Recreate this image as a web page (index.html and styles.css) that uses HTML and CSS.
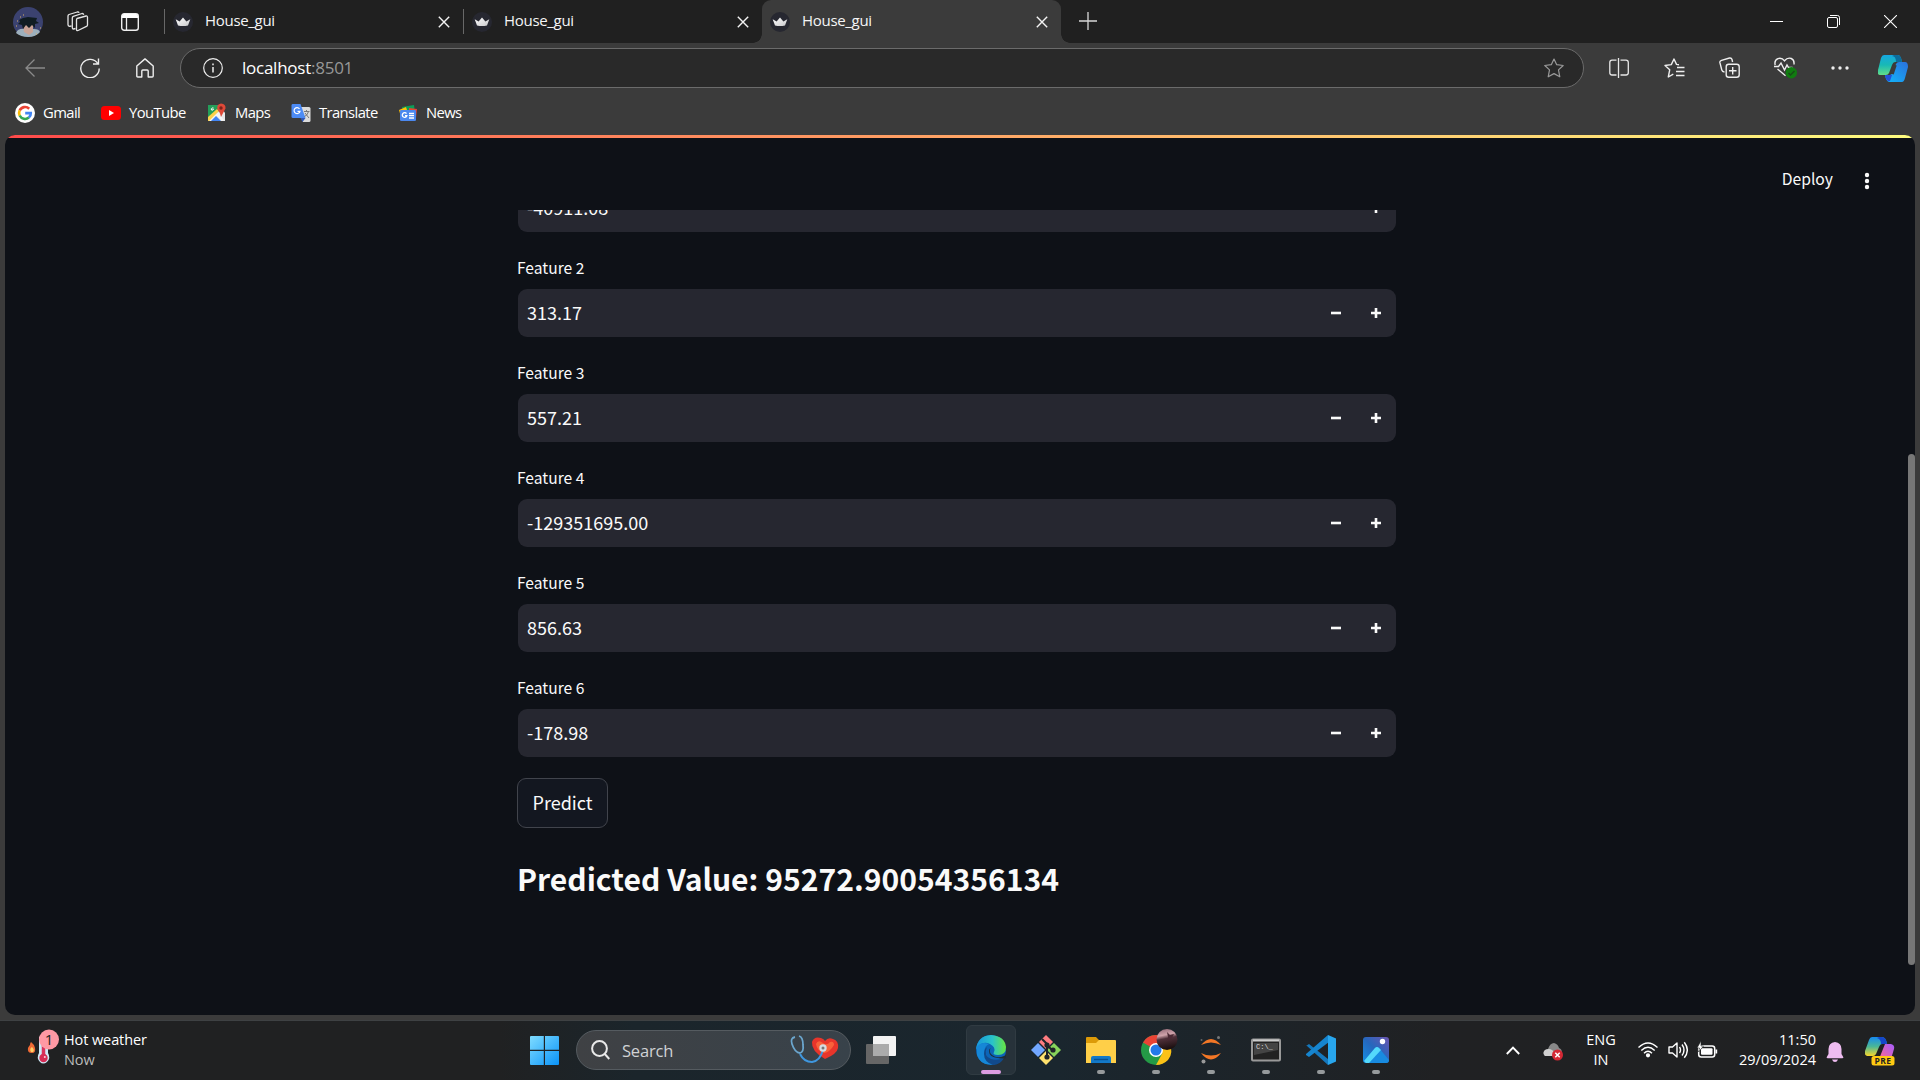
FILE: index.html
```html
<!DOCTYPE html>
<html lang="en">
<head>
<meta charset="utf-8">
<title>House_gui</title>
<link rel="stylesheet" href="styles.css">
</head>
<body>
<svg width="0" height="0" class="defs">
  <defs>
    <linearGradient id="crownFill" x1="0" y1="0" x2="1" y2="1"><stop offset="0" stop-color="#fff"/><stop offset="1" stop-color="#c9c9cc"/></linearGradient>
    <linearGradient id="winFill" x1="0" y1="0" x2="1" y2="1"><stop offset="0" stop-color="#7fdcff"/><stop offset="1" stop-color="#0a93f8"/></linearGradient>
    <linearGradient id="teal" x1="0" y1="0" x2="0" y2="1"><stop offset="0" stop-color="#16a7e0"/><stop offset=".5" stop-color="#18b9b5"/><stop offset="1" stop-color="#62dd88"/></linearGradient>
    <linearGradient id="blue" x1="1" y1="0" x2="0" y2="1"><stop offset="0" stop-color="#2b70dd"/><stop offset="1" stop-color="#11b8fb"/></linearGradient>
    <symbol id="crown" viewBox="0 0 20 20"><circle cx="10" cy="10" r="10" fill="#262730"/><path d="M2.700 7.200 6.600 9.400 10 5.400l3.400 4 3.900-2.200L15 13.600q-5 1-10 0Z" fill="url(#crownFill)"/></symbol>
    <symbol id="x" viewBox="0 0 12 12"><path d="M.8.8 11.200 11.200M11.200.8.8 11.200" stroke="#f4f4f4" stroke-width="1.400"/></symbol>
    <symbol id="minus" viewBox="0 0 12 12"><path d="M1 6H11" stroke="#fafafa" stroke-width="2.600"/></symbol>
    <symbol id="plus" viewBox="0 0 12 12"><path d="M1 6H11M6 1V11" stroke="#fafafa" stroke-width="2.600"/></symbol>
  </defs>
</svg>
<div class="screen">
  <header class="tabstrip">
    <div class="slot avatar"><svg width="30" height="30" viewBox="0 0 30 30"><circle cx="15" cy="15" r="15" fill="#3b4270"/><path d="M3 26Q5 21 12 22h9q5 0 6 3Q23 30 15 30 8 30 3 26Z" fill="#9db0bd"/><path d="M10 17h10v8l-4 3-5-3Z" fill="#c9a396"/><path d="M6 13l4-2 5-1 9 1-1 3 3 2-4 1 0 4-3-3-3 3-3-3-3 4-1-4-4-1 2-2Z" fill="#101c22"/><path d="M4 14h1M7 10h1M10 8h1M3 19h1M23 27h1M27 21h1" stroke="#d9b06a" stroke-width="1"/></svg></div>
    <div class="slot work"><svg width="22" height="22" viewBox="0 0 22 22" fill="none" stroke="#e4e4e4" stroke-width="1.300" stroke-linejoin="round"><path d="M10 7.500 19 5q1.500-.3 1.500 1.200V14q0 1-1 1.400L11 19.500q-1.500.5-1.500-1V9Q9.500 7.800 10 7.500Z"/><path d="M8.500 17.500 6.500 18q-1.200 0-1.200-1.200V7Q5.300 5.700 6.300 5.300L15 2.500q1.300-.2 1.800 1.300"/><path d="M4.500 15 2.500 15.300Q1 15 1 13.800V5Q1 4 2 3.500L10.300 1q1.300-.3 1.800.8"/></svg></div>
    <div class="slot vert"><svg width="18" height="18" viewBox="0 0 18 18"><rect x=".7" y=".7" width="16.600" height="16.600" rx="2.500" fill="none" stroke="#eee" stroke-width="1.400"/><path d="M1 5V3q0-2 2-2h12q2 0 2 2v2Z" fill="#fff"/><path d="M5.500 5V17" stroke="#eee" stroke-width="1.300"/></svg></div>
    <div class="tab"><svg class="fav"><use href="#crown"/></svg><span>House_gui</span><svg class="tabx"><use href="#x"/></svg></div>
    <div class="tab"><svg class="fav"><use href="#crown"/></svg><span>House_gui</span><svg class="tabx"><use href="#x"/></svg></div>
    <div class="tab active"><svg class="fav"><use href="#crown"/></svg><span>House_gui</span><svg class="tabx"><use href="#x"/></svg></div>
    <div class="slot newtab"><svg width="18" height="18" viewBox="0 0 18 18"><path d="M0 9H18M9 0V18" stroke="#d8d8d8" stroke-width="1.300"/></svg></div>
    <div class="winctl">
      <svg width="13" height="13" viewBox="0 0 13 13"><path d="M0 6.500H13" stroke="#fff"/></svg>
      <svg width="13" height="13" viewBox="0 0 13 13" fill="none" stroke="#fff"><rect x=".5" y="2.500" width="10" height="10" rx="1.500"/><path d="M3 .5h7.500q2 0 2 2V10"/></svg>
      <svg width="13" height="13" viewBox="0 0 13 13"><path d="M0 0 13 13M13 0 0 13" stroke="#fff" stroke-width="1.100"/></svg>
    </div>
  </header>

  <nav class="toolbar">
    <div class="slot nav"><svg width="20" height="18" viewBox="0 0 20 18" fill="none" stroke="#8a8a8a" stroke-width="1.300"><path d="M9.500.5 1 9l8.500 8.500M1 9H20"/></svg></div>
    <div class="slot nav"><svg width="20" height="20" viewBox="0 0 20 20" fill="none" stroke="#eee" stroke-width="1.400"><path d="M18 6A9.200 9.200 0 1 0 19.200 10.500M18.500.5V6H13"/></svg></div>
    <div class="slot nav"><svg width="18" height="20" viewBox="0 0 18 20" fill="none" stroke="#eee" stroke-width="1.400" stroke-linejoin="round"><path d="M.8 8 9 .9 17.200 8V18q0 1-1 1h-4V13q0-1-1-1H6.800q-1 0-1 1v6h-4q-1 0-1-1Z"/></svg></div>
    <div class="address">
      <svg width="20" height="20" viewBox="0 0 20 20"><circle cx="10" cy="10" r="9.300" fill="none" stroke="#eee" stroke-width="1.200"/><path d="M10 9v5.500M10 5.500v1.700" stroke="#eee" stroke-width="1.500"/></svg>
      <span class="url">localhost<i>:8501</i></span>
      <svg class="star" width="20" height="20" viewBox="0 0 20 20" fill="none" stroke="#999" stroke-width="1.200" stroke-linejoin="round"><path d="m10 1 2.700 5.700 6.500.8-4.700 4.400 1.300 6.900L10 15.600 4.200 18.800l1.300-6.900L.8 7.500l6.500-.8Z"/></svg>
    </div>
    <div class="slot tool first"><svg width="20" height="20" viewBox="0 0 20 20" fill="none" stroke="#e8e8e8" stroke-width="1.300"><path d="M7.500 2.200H3Q.8 2.200.8 4.500v10q0 2.500 2.200 2.500h4.500M11.500 2.200H17q2.300 0 2.300 2.300v10q0 2.500-2.300 2.500h-5.500M9.500 0V20"/></svg></div>
    <div class="slot tool"><svg width="21" height="20" viewBox="0 0 21 20" fill="none" stroke="#eee" stroke-width="1.400" stroke-linejoin="round"><path d="M15 6.800 12.500 6.400 10 1 7.300 6.600 1 7.500l4.700 4.300L4.300 19l5-2.800M13 9.500h7.500M12 13.500h8.500M12 17.500h8.500"/></svg></div>
    <div class="slot tool"><svg width="21" height="21" viewBox="0 0 21 21" fill="none" stroke="#eee" stroke-width="1.400"><rect x="7.200" y="7.200" width="13" height="13" rx="2.500"/><path d="M13.700 10V17.500M10 13.700h7.500M5.500 15q-2.200-.2-2.700-2L.9 5.700Q.5 4 2.500 3.300L10.500 1Q12.500.7 13 2.500l.6 2.500"/></svg></div>
    <div class="slot tool"><svg width="23" height="22" viewBox="0 0 23 22" fill="none" stroke="#eee" stroke-width="1.400"><path d="M1.200 8Q0 3.200 4 1.600 8 .5 10.500 3.800 13.500.2 17.300 1.500 20.500 3 20 7.500M0 9.500h4.500L7 6l3.500 7 2.500-5 1.500 2.500h4M3.500 12l8 6.700"/><circle cx="17.300" cy="15.700" r="5.700" fill="#107c10" stroke="none"/><path d="m14.500 16 2 2 4-4" stroke="#174c17"/></svg></div>
    <div class="slot tool dots"><svg width="18" height="4" viewBox="0 0 18 4" fill="#eee"><circle cx="2" cy="2" r="1.700"/><circle cx="9" cy="2" r="1.700"/><circle cx="16" cy="2" r="1.700"/></svg></div>
    <div class="slot copilot"><svg width="30" height="27" viewBox="0 0 30 27"><path d="M6 0H20q2 0 3 3l1 4H17q-2 0-3 3l-3 8q-1 2-3 2H2q-3 0-2-5L3 3Q4 0 6 0Z" fill="url(#teal)"/><path d="M16 0h4q2 0 3 3l1 4h-6Q18 1 14 1Z" fill="#0c6c9c"/><path d="M24 27H11q-3-1-4-7h5q2 0 3-3l3-8q1-2 3-2h6q3 0 3 5l-3 11q-1 4-3 4Z" fill="url(#blue)"/><path d="M7 20h7l-2 6Q8 27 7 20Z" fill="#2450d8"/><path d="m17 10-3 9" stroke="#3b3b3b" stroke-width="3.500"/></svg></div>
  </nav>

  <nav class="bookmarks">
    <a class="gmail"><svg width="20" height="20" viewBox="0 0 20 20"><circle cx="10" cy="10" r="10" fill="#fff"/><g fill="none" stroke-width="2.600"><path d="M14.200 5.700A5.900 5.900 0 0 0 4.700 7.500" stroke="#ea4335"/><path d="M4.700 7.400a5.900 5.900 0 0 0 0 5.200" stroke="#fbbc05"/><path d="M4.700 12.500a5.900 5.900 0 0 0 9.200 2" stroke="#34a853"/><path d="M13.800 14.500Q16 12.500 15.800 10.100H10.200" stroke="#4285f4"/></g></svg><span>Gmail</span></a>
    <a class="yt"><svg width="20" height="20" viewBox="0 0 20 20"><rect y="3" width="20" height="14" rx="3.500" fill="#f00"/><path d="M8 7v6l5-3Z" fill="#fff"/></svg><span>YouTube</span></a>
    <a class="maps"><svg width="20" height="20" viewBox="0 0 20 20"><path d="M1 2h12l5 8v8H1Z" fill="#e8e8e8"/><path d="M1 2h11L12 8 1 17Z" fill="#249f5a"/><path d="m1 18 10-9 6 8-2 1-5-5-6 5Z" fill="#f5f5f5"/><path d="m1 14 9-8 2 2L2 18H1Z" fill="#fcd24c"/><path d="m4 18 5-5 5 5Z" fill="#4285f4"/><path d="M14 14Q13 9 10.500 6.500 9 1.500 14 .5q5 .5 4.500 5Q16 10 14 14Z" fill="#df4938"/><circle cx="14" cy="5" r="1.700" fill="#7d231c"/><path d="M6.500 5H5.200q-1.500.7-.7 2 1.500.7 2-.7H5.500" stroke="#fff" fill="none"/></svg><span>Maps</span></a>
    <a class="trans"><svg width="20" height="20" viewBox="0 0 20 20"><path d="M7 4h11q1.500 0 1.500 1.500v12q0 1.500-1.500 1.500h-6Z" fill="#dcdcdc"/><path d="M1.500 1h8l5 14H2Q.5 15 .5 13.500V2.500Q.5 1 1.500 1Z" fill="#4c8bf5"/><path d="m9.500 15 5 0-3 4Z" fill="#3057b5"/><path d="M8.500 5.800a3 3 0 1 0 .5 2.500H6.500" stroke="#fff" stroke-width="1.200" fill="none"/><path d="M13 8.500h5.500M15.500 7v1.500M17.500 8.500q-1 4-4 5M14 10l4 5" stroke="#777" fill="none"/></svg><span>Translate</span></a>
    <a class="news"><svg width="20" height="20" viewBox="0 0 20 20"><path d="m4 4 12-2 1 8H5Z" fill="#0c9d58"/><path d="m1 7 7-3 3 9-8 1Z" fill="#ffc107"/><path d="m11 5 8 1-1 9h-7Z" fill="#e94235"/><rect x="2" y="7" width="16" height="11" rx="1.300" fill="#4b88ef"/><path d="M8.500 10.700a2.300 2.300 0 1 0 .3 2H7M11 10.500h5M11 12.700h5M11 15h5" stroke="#fff" stroke-width="1.300" fill="none"/></svg><span>News</span></a>
  </nav>

  <main class="page">
    <div class="rainbow"></div>
    <div class="apphead"><span class="deploy">Deploy</span><svg width="6" height="18" viewBox="0 0 6 18" fill="#fafafa"><circle cx="3" cy="3" r="2.200"/><circle cx="3" cy="9" r="2.200"/><circle cx="3" cy="15" r="2.200"/></svg></div>
    <section class="scroller">
      <div class="form">
        <div class="number"><span>-40911.08</span><svg><use href="#minus"/></svg><svg><use href="#plus"/></svg></div>
        <label>Feature 2</label>
        <div class="number"><span>313.17</span><svg><use href="#minus"/></svg><svg><use href="#plus"/></svg></div>
        <label>Feature 3</label>
        <div class="number"><span>557.21</span><svg><use href="#minus"/></svg><svg><use href="#plus"/></svg></div>
        <label>Feature 4</label>
        <div class="number"><span>-129351695.00</span><svg><use href="#minus"/></svg><svg><use href="#plus"/></svg></div>
        <label>Feature 5</label>
        <div class="number"><span>856.63</span><svg><use href="#minus"/></svg><svg><use href="#plus"/></svg></div>
        <label>Feature 6</label>
        <div class="number"><span>-178.98</span><svg><use href="#minus"/></svg><svg><use href="#plus"/></svg></div>
        <button class="predict">Predict</button>
        <h2>Predicted Value: 95272.90054356134</h2>
      </div>
    </section>
    <div class="thumb"></div>
  </main>

  <footer class="taskbar">
    <div class="weather">
      <svg width="34" height="38" viewBox="0 0 34 38"><path d="M1 19q1-2 2-3 0-2 1-3 3 2 4 6 1 5-3 5Q0 24 1 19Z" fill="#ef6a35"/><path d="M4 23q-2-3 1-5 3 3 1 5Z" fill="#ffd067"/><path d="M12 8q5-4 9 0V24q3 5-1 9-4 3-7 0-4-4-1-9Z" fill="#cfe9f7"/><path d="M16.500 12V28" stroke="#d8325a" stroke-width="3.500"/><circle cx="16.500" cy="29" r="4.200" fill="#d62c55"/><circle cx="17.800" cy="28" r="1" fill="#ffd0dc"/><circle cx="22" cy="10.500" r="10" fill="#ff99a4"/><text x="22" y="16" text-anchor="middle" class="badge">1</text></svg>
      <div class="wtext"><span>Hot weather</span><span class="dim">Now</span></div>
    </div>
    <div class="apps">
      <svg class="start" width="29" height="29" viewBox="0 0 29 29" fill="url(#winFill)"><path d="M1 0h12.800v13.800H0V1Q0 0 1 0ZM15 0h13q1 0 1 1v12.800H15ZM0 15h13.800v14H1q-1 0-1-1ZM15 15h14v13q0 1-1 1H15Z"/></svg>
      <div class="search">
        <svg width="19" height="20" viewBox="0 0 19 20" fill="none" stroke="#e9e9e9" stroke-width="2"><circle cx="8.500" cy="8.500" r="7.400"/><path d="m13.800 14 4.500 5"/></svg>
        <span>Search</span>
        <svg class="stetho" width="50" height="30" viewBox="0 0 50 30"><path d="M35 24Q21 16 22 7q2-6 9-4 3 1 4 3 3-4 8-2 6 2 5 9-1 6-13 11Z" fill="#e8352b"/><path d="M26 9q2-5 7-1 4 3 7-1 4-1 4 3-4 7-10 8-7-2-8-9Z" fill="#ff7040" opacity=".75"/><path d="M10 19Q14 27 22 27q8-1 11-12" stroke="#3f97df" stroke-width="2" fill="none"/><path d="M5 2Q0 3 2 9q3 9 8 9 4-1 3-8 0-8-4-9" stroke="#6ba6ce" stroke-width="1.800" fill="none"/><circle cx="33" cy="13" r="3.700" fill="#d7dce0"/><circle cx="33" cy="13" r="1.500" fill="#777"/></svg>
      </div>
      <svg class="taskview" width="30" height="28" viewBox="0 0 30 28"><rect y="8" width="23" height="20" rx="1" fill="#666"/><rect x="7" width="23" height="20" rx="1" fill="#f3f3f3"/><path d="M7 8h16v12H7Z" fill="#ababab"/></svg>
      <div class="app current"><svg width="30" height="30" viewBox="0 0 30 30"><defs><linearGradient id="eg" x1="0" x2="1"><stop offset="0" stop-color="#1795dc"/><stop offset=".55" stop-color="#2ac3c8"/><stop offset="1" stop-color="#68e640"/></linearGradient></defs><circle cx="15" cy="15" r="15" fill="#0c65b8"/><path d="M0 15Q1 1 15 0q14 1 15 12 0 8-8 8-6 0-4-3 2-5-4-8Q5 5 0 15Z" fill="url(#eg)"/><path d="M1 12Q5 6 13 9q-6 3-4 10 2 8 10 10-14 3-18-9Z" fill="#1687d7"/><path d="M11 12q-4 9 4 12 6 2 13-1-4 7-11 7Q8 27 8 19q0-5 3-7Z" fill="#114a8c"/><path d="M14.500 13q-2 4 1.500 7 5 4 12 1l2-1v3q-3 1-8 0-9-1-9-7 0-2 1.500-3Z" fill="#202d34"/></svg><b></b></div>
      <div class="app none"><svg width="30" height="30" viewBox="0 0 30 30"><path d="m15 0 7 7-7 7-7-7Z" fill="#ff7c80"/><path d="m7 8 7 7-7 7-7-7Z" fill="#72a7ff"/><path d="m23 8 7 7-7 7-7-7Z" fill="#88d35a"/><path d="m15 16 7 7-7 7-7-7Z" fill="#ffe26e"/><path d="M11 4l5 5v14M16 10l6 6" stroke="#202428" stroke-width="2" fill="none"/><circle cx="16" cy="10" r="2.600" fill="#202428"/><circle cx="16" cy="22" r="2.600" fill="#202428"/><circle cx="22" cy="15" r="2.600" fill="#202428"/></svg><b></b></div>
      <div class="app"><svg width="30" height="30" viewBox="0 0 30 30"><path d="M0 3Q0 2 1 2h9l3 3h12v8H0Z" fill="#dc9a08"/><path d="M0 8h10l3-3h16q1 0 1 1v22H0Z" fill="#ffcf48"/><path d="M5 28v-5q0-2 2-2h16q2 0 2 2v5Z" fill="#1379c8"/><path d="M8 24.500h14" stroke="#075092" stroke-width="1.400"/></svg><b></b></div>
      <div class="app"><svg class="chrome" width="38" height="38" viewBox="0 0 38 38"><defs><linearGradient id="pic" x1="0" y1="0" x2=".2" y2="1"><stop offset="0" stop-color="#8d6371"/><stop offset=".35" stop-color="#d0a3ab"/><stop offset=".52" stop-color="#50303a"/><stop offset="1" stop-color="#1c1011"/></linearGradient></defs><circle cx="19" cy="19" r="15" fill="#249a46"/><path d="M19 19 6 11.500Q10 4 19 4q9 0 13 7.500V19Z" fill="#ea4335"/><path d="M19 12h13.300Q37 22 31 29q-5 5-12 5l6.500-12Z" fill="#fbc116"/><circle cx="19" cy="19" r="7" fill="#fff"/><circle cx="19" cy="19" r="5.500" fill="#2479e9"/><circle cx="30" cy="8.500" r="10.500" fill="url(#pic)"/><path d="m30 1 1 5-1 4 5-3 2-4-4 1Z" fill="#4b2934"/></svg><b></b></div>
      <div class="app"><svg width="22" height="30" viewBox="0 0 22 30"><path d="M1 10Q11-2 21 10 11 5 1 10ZM1 18q10 5 20 0Q11 31 1 18Z" fill="#f37726"/><circle cx="18.500" cy="2.500" r="1.500" fill="#777"/><circle cx="1.500" cy="5" r="1" fill="#666"/><circle cx="3.500" cy="26.500" r="2" fill="#999"/></svg><b></b></div>
      <div class="app"><svg width="30" height="30" viewBox="0 0 30 30"><rect x="1" y="4.500" width="28" height="21" rx="1" fill="#222" stroke="#999" stroke-width="2"/><path d="M2 5.500H28" stroke="#ccc" stroke-width="2"/><path d="M3 8h24v7L3 20Z" fill="#444"/><text x="5" y="14" class="cmd">C:\_</text></svg><b></b></div>
      <div class="app"><svg width="30" height="30" viewBox="0 0 30 30"><path d="m0 11 3-2 19 15v6L1 11Z" fill="#1578bd"/><path d="m0 19 22-19 1 7L3 22l-3-2Z" fill="#1685cf"/><path d="m22 0 7 3q1 0 1 1v22q0 1-1 1l-7 3Z" fill="#28a6ed"/></svg><b></b></div>
      <div class="app"><svg width="26" height="26" viewBox="0 0 26 26"><defs><linearGradient id="ph" x1="0" y1="1" x2="1" y2="0"><stop stop-color="#158fe5"/><stop offset=".5" stop-color="#2567bd"/><stop offset="1" stop-color="#6d55af"/></linearGradient></defs><rect width="26" height="26" rx="3" fill="url(#ph)"/><path d="M1 24 12 11q2-2 4 0l10 12q0 3-3 3H3Z" fill="#188be1"/><path d="M1 24 12 11q2-2 4 0l2 2L6 26H3Z" fill="#54d9fb"/><circle cx="19.500" cy="4.500" r="2.700" fill="#fff"/></svg><b></b></div>
    </div>
    <div class="tray">
      <svg width="14" height="9" viewBox="0 0 14 9" fill="none" stroke="#fff" stroke-width="1.900"><path d="m.8 8 6.200-6.300L13.200 8"/></svg>
      <svg class="cloud" width="20" height="18" viewBox="0 0 20 18"><path d="M2 13q-3-3 0-6 2-1 3-1Q7 0 11 0q4 1 5 5 3 1 3 5l-8 3Z" fill="#888"/><path d="M2 13q-3-3 0-6 4-2 7 0l6 5-2 1Z" fill="#d0d0d0"/><circle cx="14.500" cy="12" r="5.500" fill="#d42834"/><path d="m12.300 9.800 4.400 4.400m0-4.400-4.400 4.400" stroke="#fff" stroke-width="1.500"/></svg>
      <div class="lang"><span>ENG</span><span>IN</span></div>
      <svg class="wifi" width="20" height="16" viewBox="0 0 20 16" fill="none" stroke="#fff" stroke-width="1.400"><path d="M.5 5.500q9.500-9 19 0M3.300 8.500q6.700-6.500 13.400 0M6 11.200q4-4 8 0"/><circle cx="10" cy="13.300" r="1.400" fill="#fff"/></svg>
      <svg class="vol" width="20" height="18" viewBox="0 0 20 18" fill="none" stroke="#fff" stroke-width="1.400" stroke-linejoin="round"><path d="M1 6h3.500L9 2v14l-4.500-4H1ZM11.500 6q2 3 0 6M14 3.500q4 5.500 0 11M16.300 1.200q6 7.800 0 15.600"/></svg>
      <svg class="batt" width="21" height="18" viewBox="0 0 21 18"><rect x="1.700" y="5" width="16" height="11" rx="2.500" fill="none" stroke="#fff" stroke-width="1.500"/><rect x="4" y="7.300" width="11.500" height="6.500" rx="1" fill="#fff"/><path d="M18.500 8.500h1.700v4h-1.700Z" fill="#fff"/><path d="M4 0 0 7h2.500L1.500 11 6.500 5H4Z" fill="#fff" stroke="#202122" stroke-width=".6"/></svg>
      <div class="clock"><span>11:50</span><span>29/09/2024</span></div>
      <svg class="bell" width="18" height="20" viewBox="0 0 18 20" fill="#eebcf0"><path d="M2.500 7q0-6 6.500-7 6.500 1 6.500 7v5l2 3.500-1 .8h-15l-1-.8 2-3.500ZM6 17.500h6q-1 2.500-3 2.500t-3-2.500Z"/></svg>
      <svg class="pre" width="30" height="29" viewBox="0 0 30 29"><defs><linearGradient id="cp" x1="0" y1="0" x2="0" y2="1"><stop stop-color="#168bf0"/><stop offset=".5" stop-color="#4ab797"/><stop offset="1" stop-color="#f8d72b"/></linearGradient><linearGradient id="cq" x1="0" y1="1" x2="1" y2="0"><stop stop-color="#ff6a8c"/><stop offset="1" stop-color="#a45cff"/></linearGradient></defs><path d="M7 0h10q4 0 5 7h-5q-2 0-3 3l-3 7q-1 2-3 2H2Q-1 18 0 14L4 3Q5 0 7 0Z" fill="url(#cp)"/><path d="M14 0h3q4 0 5 7h-6Q16 2 12 1Z" fill="#1547c9"/><path d="M20 7h6q4 1 3 5l-3 10H14Z" fill="url(#cq)"/><rect x="6.500" y="19" width="23" height="9.500" rx="2.500" fill="#ffca12"/><text x="18" y="27" text-anchor="middle" class="pretext">PRE</text></svg>
    </div>
  </footer>
</div>
</body>
</html>
```
FILE: styles.css
```css
* { box-sizing: border-box; }
body { margin: 0; background: #3b3b3b; color: #fff; overflow: hidden; font-family: "Open Sans", "Noto Sans", sans-serif; }
svg { display: block; flex: none; }
svg.defs { position: absolute; }
.screen { width: 1920px; height: 1080px; display: grid; grid-template-rows: 43px 50px 42px 880px 5px 60px; }
.slot { display: flex; align-items: center; justify-content: center; flex: none; }

.tabstrip { display: flex; background: #202020; }
.avatar { width: 56px; }
.work { width: 43px; }
.vert { width: 65px; padding-right: 3px; }
.tab { width: 299px; flex: none; display: flex; align-items: center; padding: 1px 13px 0 8px; font-size: 15px; letter-spacing: -.3px; border-left: 1px solid transparent; background: linear-gradient(#686868, #686868) 0 9px / 1px 25px no-repeat; background-origin: border-box; color: #f5f5f5; }
.tab span { margin-left: 12px; margin-top: -4px; flex: 1; }
.fav { width: 20px; height: 20px; }
.tabx { width: 12px; height: 12px; }
.tab.active { width: 299px; background: #3b3b3b; border: 0; padding-left: 8px; border-radius: 9px 9px 0 0; position: relative; }
.tab.active::before, .tab.active::after { content: ""; position: absolute; bottom: 0; width: 9px; height: 9px; background: radial-gradient(circle at 0 0, #202020 8.500px, #3b3b3b 9px); }
.tab.active::before { left: -9px; }
.tab.active::after { right: -9px; transform: scaleX(-1); }
.newtab { width: 54px; padding-bottom: 1px; }
.winctl { margin-left: auto; display: flex; align-items: center; gap: 44px; padding-right: 23px; }

.toolbar { display: flex; align-items: center; padding-left: 7px; }
.nav { width: 55px; padding-bottom: 1px; }
.address { width: 1404px; height: 40px; margin-left: 8px; border: 1px solid #6b6b6b; border-radius: 20px; background: #292929; display: flex; align-items: center; padding: 0 19px 0 22px; }
.url { margin-left: 19px; flex: 1; font-size: 17px; letter-spacing: -.25px; margin-top: -2px; }
.url i { font-style: normal; color: #979797; }
.tool { width: 55.500px; padding-bottom: 1px; }
.dots { padding-right: 2px; }
.tool.first { margin-left: 7px; }
.copilot { width: 48px; }

.bookmarks { display: flex; align-items: center; padding: 0 0 3px 15px; font-size: 14.800px; letter-spacing: -.6px; }
.bookmarks a { display: flex; align-items: center; gap: 8px; height: 22px; }
.bookmarks span { margin-top: -1px; }
.gmail { width: 86px; }
.yt { width: 106px; }
.maps { width: 84px; }
.trans { width: 107px; }

.page { margin: 0 5px; background: #0e1117; border-radius: 10px; overflow: hidden; position: relative; display: flex; flex-direction: column; font-family: "Noto Sans CJK SC", "Noto Sans", sans-serif; color: #fafafa; }
.rainbow { height: 3px; flex: none; background: linear-gradient(90deg, #ff4b4b, #fffd80); }
.apphead { height: 72px; flex: none; display: flex; align-items: center; justify-content: flex-end; padding: 13px 45px 0 0; gap: 31px; }
.deploy { font-size: 15.700px; line-height: 24px; margin-top: -4px; }
.scroller { flex: 1; overflow: hidden; }
.form { width: 880px; margin: -26px 0 0 512px; display: flex; flex-direction: column; }
.form label { height: 57px; padding-top: 22px; font-size: 15.600px; line-height: 26px; flex: none; }
.number { height: 48px; flex: none; margin: 0 1px; border-radius: 9px; background: #262730; display: flex; align-items: center; padding: 0 14px 0 9px; gap: 28px; }
.number span { flex: 1; font-size: 18px; line-height: 26px; margin-top: -2px; }
.number svg { width: 12px; height: 12px; }
.predict { align-self: flex-start; width: 91px; height: 50px; margin-top: 21px; padding: 0 0 2px; border: 1px solid #41444c; border-radius: 9px; background: #131720; color: inherit; font: 18px/26px "Noto Sans CJK SC", "Noto Sans", sans-serif; }
.form h2 { margin: 27px 0 0; font-size: 30.100px; line-height: 46px; font-weight: 700; white-space: nowrap; }
.thumb { position: absolute; right: 0; top: 319px; width: 7px; height: 511px; border-radius: 4px; background: #777; }

.taskbar { grid-row: 6; display: flex; align-items: center; padding-bottom: 1px; border-top: 1px solid #3e4143; background: linear-gradient(90deg, #202122 0, #202122 26%, #1b252b 33%, #1a262e 55%, #202123 75%, #202122 100%); font-size: 14.500px; }
.weather { width: 530px; display: flex; padding: 0 0 2px 27px; gap: 3px; }
.wtext { display: flex; flex-direction: column; line-height: 20px; letter-spacing: -.1px; padding-top: 1px; }
.dim { color: #bbb; }
.badge { font: 15px "Open Sans", sans-serif; fill: #222; }
.apps { display: flex; align-items: center; height: 58px; }
.search { width: 275px; height: 40px; margin: -1px 15px 0 17px; border: 1px solid #555b60; border-radius: 20px; background: linear-gradient(90deg, #3f4144, #38424a); display: flex; align-items: center; padding: 0 10px 0 14px; font-size: 16.500px; letter-spacing: -.2px; color: #d0d2d4; }
.search span { margin-left: 12px; flex: 1; padding-top: 1px; }
.taskview { margin-right: 70px; }
.app { width: 50px; height: 50px; margin-right: 5px; border-radius: 6px; position: relative; display: flex; align-items: center; justify-content: center; flex: none; }
.app b { position: absolute; bottom: 1px; left: 21px; width: 8px; height: 4px; border-radius: 2px; background: #969a9c; }
.chrome { overflow: visible; }
.current { background: #27323a; border: 1px solid #303b42; }
.current b { left: 14px; bottom: 0; width: 20px; background: #dc9de2; }
.none b { display: none; }
.cmd { font: 7px "Liberation Mono", monospace; fill: #ddd; }
.tray { margin-left: auto; height: 58px; display: flex; align-items: center; padding-right: 25px; }
.cloud { margin-left: 23px; margin-top: 4px; }
.lang, .clock { display: flex; flex-direction: column; line-height: 20px; text-align: center; margin-top: -1px; }
.lang { width: 38px; margin-left: 19px; }
.wifi { margin-left: 18px; }
.vol { margin-left: 10px; }
.batt { margin-left: 9px; }
.clock { width: 80px; margin-left: 18px; text-align: right; align-items: flex-end; white-space: nowrap; letter-spacing: 0; }
.bell { margin-left: 10px; margin-top: 3px; }
.pre { margin-left: 21px; margin-top: 3px; }
.pretext { font: 700 8.500px "Open Sans", sans-serif; letter-spacing: .4px; fill: #222; }
```
